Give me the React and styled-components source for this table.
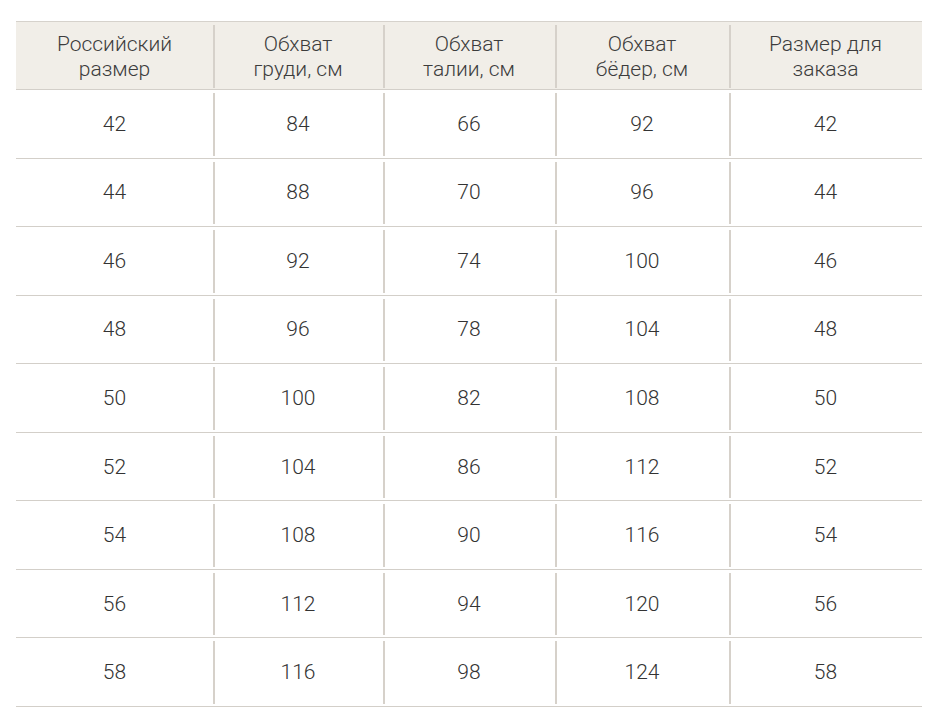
import React from "react";
import styled, { createGlobalStyle } from "styled-components";

const Global = createGlobalStyle`
  html, body { margin: 0; padding: 0; background: #ffffff; }
  body { font-family: Roboto, "Noto Sans", "Liberation Sans", sans-serif; }
`;

const Page = styled.div`
  padding: 21px 0 0 16px;
`;

const Table = styled.div`
  width: 906px;
  border-top: 1px solid #d6d2cc;
`;

const Row = styled.div`
  display: grid;
  grid-template-columns: 197px 170px 172px 174px 1fr;
  box-sizing: border-box;
  height: ${(p) => (p.$head ? "68px" : "68.56px")};
  background: ${(p) => (p.$head ? "#f1eee8" : "#ffffff")};
  border-bottom: 1px solid #d3cfc9;
`;

const Cell = styled.div`
  display: flex;
  align-items: center;
  justify-content: center;
  text-align: center;
  margin: ${(p) => (p.$head ? "3px 0 1px" : "3px 0 2px")};
  padding-right: ${(p) => (p.$first ? "0" : "2px")};
  border-left: ${(p) => (p.$first ? "none" : "2px solid #d6d1ca")};
  font-size: 21px;
  font-weight: 300;
  line-height: 25px;
  color: ${(p) => (p.$head ? "#3c3c3c" : "#333333")};
`;

const heads = [
  ["Российский", "размер"],
  ["Обхват", "груди, см"],
  ["Обхват", "талии, см"],
  ["Обхват", "бёдер, см"],
  ["Размер для", "заказа"],
];

const data = [
  [42, 84, 66, 92, 42],
  [44, 88, 70, 96, 44],
  [46, 92, 74, 100, 46],
  [48, 96, 78, 104, 48],
  [50, 100, 82, 108, 50],
  [52, 104, 86, 112, 52],
  [54, 108, 90, 116, 54],
  [56, 112, 94, 120, 56],
  [58, 116, 98, 124, 58],
];

export default function App() {
  return (
    <Page>
      <Global />
      <Table>
        <Row $head>
          {heads.map((h, i) => (
            <Cell key={i} $head $first={i === 0}>
              {h[0]}
              <br />
              {h[1]}
            </Cell>
          ))}
        </Row>
        {data.map((r, ri) => (
          <Row key={ri}>
            {r.map((v, i) => (
              <Cell key={i} $first={i === 0}>
                {v}
              </Cell>
            ))}
          </Row>
        ))}
      </Table>
    </Page>
  );
}
